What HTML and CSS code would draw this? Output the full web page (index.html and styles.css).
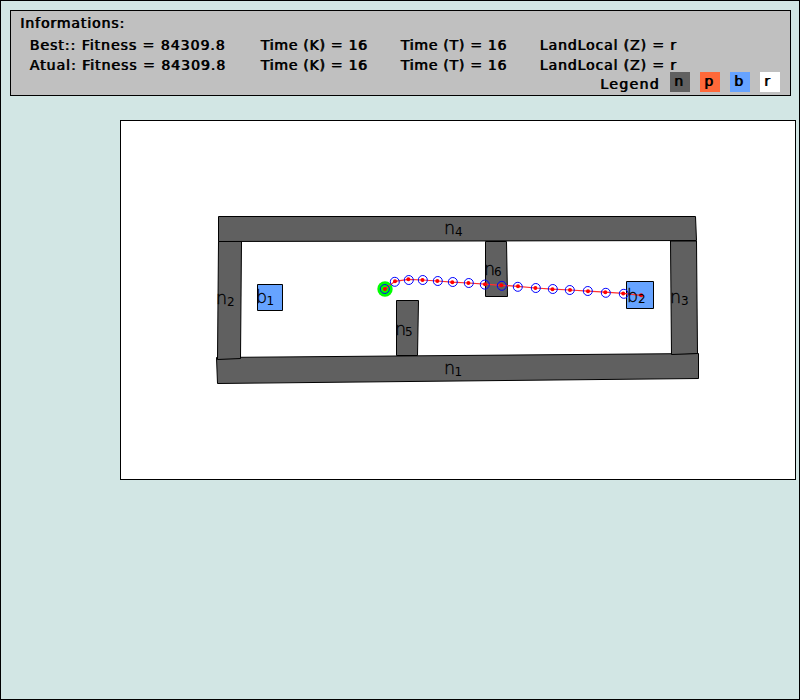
FILE: index.html
```
<!DOCTYPE html>
<html lang="en">
<head>
<meta charset="utf-8">
<title>Route planner</title>
<link rel="stylesheet" href="styles.css">
</head>
<body>
<main class="window">
  <header class="panel">
    <div class="title">Informations:</div>
    <div class="row"><span class="fitness">Best:: Fitness = 84309.8</span><span class="time">Time (K) = 16</span><span class="time">Time (T) = 16</span><span>LandLocal (Z) = r</span></div>
    <div class="row"><span class="fitness">Atual: Fitness = 84309.8</span><span class="time">Time (K) = 16</span><span class="time">Time (T) = 16</span><span>LandLocal (Z) = r</span></div>
    <div class="legend"><span class="legend-title">Legend</span><span class="key n">n</span><span class="key p">p</span><span class="key b">b</span><span class="key r">r</span></div>
  </header>
  <section class="map">
    <svg class="scene" viewBox="121 121 674 358" width="674" height="358">
      <g class="wall">
        <path d="M216.5 357.5L698.5 353.5V378.5L217.5 383.5Z"/>
        <path d="M218.5 241.5H241.5L240.5 358.5L217.5 359.5Z"/>
        <path d="M670.5 241H696.5L697.5 353.5L671.5 354.5Z"/>
        <path d="M218.5 216.5H695.5L696.5 240.5L218.5 241.5Z"/>
        <path d="M396.5 300.5H418.5L417.5 355.5H396.5Z"/>
        <path d="M485.5 241.5H506.5L507.5 296.5H485.5Z"/>
      </g>
      <g class="base">
        <path d="M257.5 284.5H282.5V310.5H257.5Z"/>
        <path d="M626.5 281.5H653.5V308.5H626.5Z"/>
      </g>
      <circle class="start" cx="385" cy="289" r="7.7"/>
      <polyline class="route" points="385,289 395,281.3 408.3,279.3 422.5,280 437.3,281 452.3,282.2 468.4,283 485,284.2 501.3,285.3 518,286.3 535.4,288 552.5,289.2 570,290 588,291.2 605.3,292.2 623.2,293.4 641.2,295.3"/>
      <g class="dot">
        <circle cx="385" cy="289" r="2"/><circle cx="395" cy="281.3" r="2"/><circle cx="408.3" cy="279.3" r="2"/><circle cx="422.5" cy="280" r="2"/><circle cx="437.3" cy="281" r="2"/><circle cx="452.3" cy="282.2" r="2"/><circle cx="468.4" cy="283" r="2"/><circle cx="485" cy="284.2" r="2"/><circle cx="501.3" cy="285.3" r="2"/><circle cx="518" cy="286.3" r="2"/><circle cx="535.4" cy="288" r="2"/><circle cx="552.5" cy="289.2" r="2"/><circle cx="570" cy="290" r="2"/><circle cx="588" cy="291.2" r="2"/><circle cx="605.3" cy="292.2" r="2"/><circle cx="623.2" cy="293.4" r="2"/><circle cx="641.2" cy="295.3" r="2"/>
      </g>
      <g class="ring">
        <circle cx="384.8" cy="289" r="4.5"/><circle cx="394.8" cy="281.8" r="4.5"/><circle cx="408.8" cy="280" r="4.5"/><circle cx="422.8" cy="280" r="4.5"/><circle cx="437.8" cy="281" r="4.5"/><circle cx="452.8" cy="282" r="4.5"/><circle cx="468.8" cy="283" r="4.5"/><circle cx="484.8" cy="284.6" r="4.5"/><circle cx="501.8" cy="285.8" r="4.5"/><circle cx="517.8" cy="286.8" r="4.5"/><circle cx="535.8" cy="288" r="4.5"/><circle cx="552.8" cy="289" r="4.5"/><circle cx="569.8" cy="290" r="4.5"/><circle cx="587.8" cy="291" r="4.5"/><circle cx="605.8" cy="292.8" r="4.5"/><circle cx="623.8" cy="293.8" r="4.5"/>
      </g>
      <g class="label">
        <text x="444" y="374">n<tspan class="sub" x="454.500" dy="2">1</tspan></text>
        <text x="216" y="304">n<tspan class="sub" x="227" dy="2">2</tspan></text>
        <text x="670" y="303">n<tspan class="sub" x="681" dy="2">3</tspan></text>
        <text x="444" y="234">n<tspan class="sub" x="455" dy="2">4</tspan></text>
        <text x="395" y="335">n<tspan class="sub" x="405" dy="1">5</tspan></text>
        <text x="484" y="275">n<tspan class="sub" x="494" dy="1">6</tspan></text>
        <text x="256" y="303">b<tspan class="sub" x="266.500" dy="2">1</tspan></text>
        <text x="627" y="302">b<tspan class="sub" x="638" dy="1">2</tspan></text>
      </g>
    </svg>
  </section>
</main>
</body>
</html>
```
FILE: styles.css
```
* { box-sizing: border-box; }
body { margin: 0; }
.window {
  width: 800px;
  height: 700px;
  padding: 9px;
  border: 1px solid #000;
  background: #d2e6e4;
}
.panel {
  width: 781px;
  height: 86px;
  padding: 3px 10px 0 9px;
  border: 1px solid #000;
  background: #c0c0c0;
  color: #000;
  font: 14px/20px "DejaVu Sans", sans-serif;
  letter-spacing: 0.9px;
  text-shadow: 0.8px 0 0 #000;
  white-space: nowrap;
}
.title { height: 21px; line-height: 19px; }
.row {
  display: grid;
  grid-template-columns: 231px 140px 139px 1fr;
  height: 20px;
  padding-left: 9.5px;
}
.fitness { letter-spacing: 1px; }
.time { letter-spacing: 0.75px; }
.legend {
  display: flex;
  justify-content: flex-end;
  gap: 10px;
  height: 20px;
  margin-top: -3px;
}
.legend-title { width: 60px; line-height: 25px; letter-spacing: 1.4px; }
.key { width: 20px; height: 20px; padding-left: 4px; line-height: 18px; }
.n { background: #606060; }
.p { background: #ff6839; }
.b { background: #66a3ff; }
.r { background: #fff; }
.map {
  width: 676px;
  height: 360px;
  margin: 24px 0 0 110px;
  border: 1px solid #000;
  background: #fff;
}
.scene { display: block; }
.wall { fill: #606060; stroke: #000; }
.base { fill: #66a3ff; stroke: #000; }
.start { fill: #0f0; }
.route { fill: none; stroke: #ff3030; stroke-width: 1.2; }
.dot { fill: #f00; }
.ring { fill: none; stroke: #00f; }
.label { fill: #000; stroke: #000; stroke-width: 0.3; font: 200 17.5px "DejaVu Sans Light", "DejaVu Sans", sans-serif; }
.sub { font: 12px "DejaVu Sans", sans-serif; stroke: none; }
```
